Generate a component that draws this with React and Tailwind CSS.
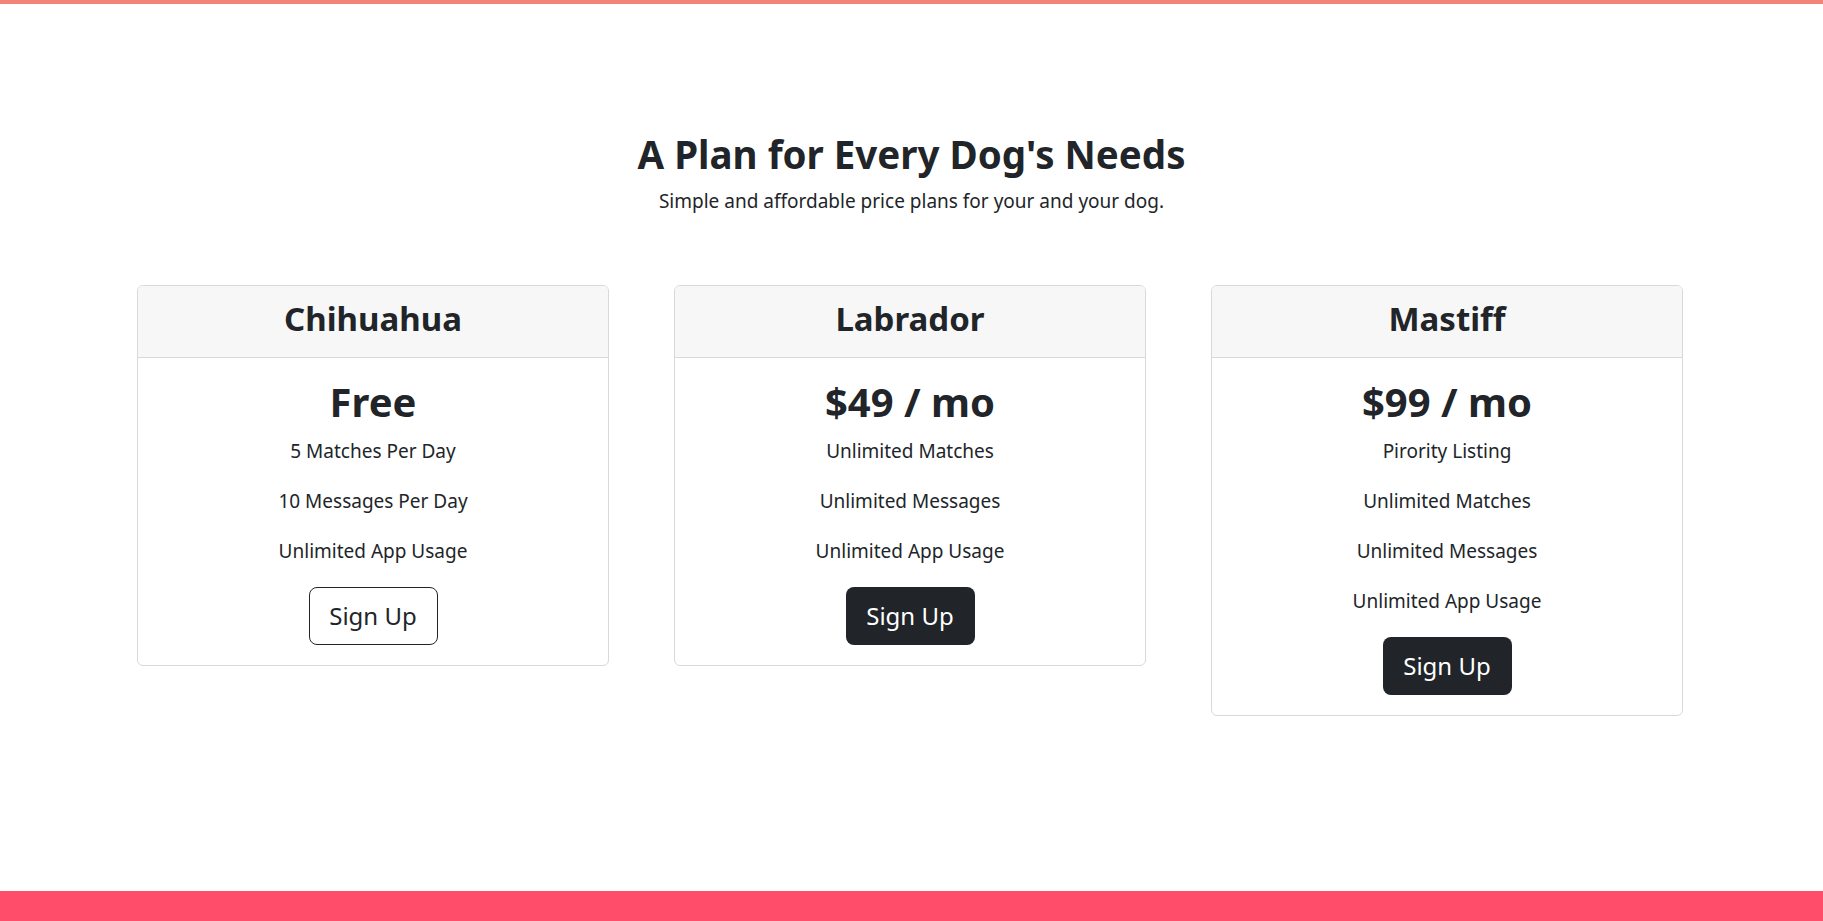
const PLANS = [
  {
    name: 'Chihuahua',
    price: 'Free',
    features: ['5 Matches Per Day', '10 Messages Per Day', 'Unlimited App Usage'],
    outline: true
  },
  {
    name: 'Labrador',
    price: '$49 / mo',
    features: ['Unlimited Matches', 'Unlimited Messages', 'Unlimited App Usage'],
    outline: false
  },
  {
    name: 'Mastiff',
    price: '$99 / mo',
    features: ['Pirority Listing', 'Unlimited Matches', 'Unlimited Messages', 'Unlimited App Usage'],
    outline: false
  }
];

const PlanCard = ({ plan }) => (
  <div className="border border-[#d9d9d9] rounded-[6px] overflow-hidden bg-white">
    <div className="h-[72px] pb-[6px] bg-[#f7f7f7] border-b border-[#d9d9d9] flex items-center justify-center">
      <h3 className="text-[33px] font-bold leading-none">{plan.name}</h3>
    </div>
    <div className="pt-[21px] pb-[20px] flex flex-col items-center">
      <h1 className="h-[48px] pb-[2px] flex items-center text-[40px] font-bold leading-none">{plan.price}</h1>
      <ul className="flex flex-col items-center">
        {plan.features.map((f) => (
          <li key={f} className="h-[50px] pb-[1px] flex items-center text-[19px]">
            {f}
          </li>
        ))}
      </ul>
      <button
        type="button"
        className={`mt-[10px] w-[129px] h-[58px] rounded-[8px] text-[24px] ${
          plan.outline ? 'border border-[#212529] text-[#212529] bg-white' : 'bg-[#212529] text-white'
        }`}
      >
        Sign Up
      </button>
    </div>
  </div>
);

export default function App() {
  return (
    <div
      className="min-h-screen flex flex-col bg-white text-[#212529]"
      style={{ fontFamily: '"Noto Sans", "Open Sans", sans-serif' }}
    >
      <div className="h-[4px] bg-[#f38377]" />

      <main className="flex-1 pt-[126px]">
        <div className="text-center">
          <h2 className="text-[38.5px] font-bold leading-[48px]">A Plan for Every Dog's Needs</h2>
          <p className="mt-[10px] text-[19px] leading-[27px]">
            Simple and affordable price plans for your and your dog.
          </p>
        </div>

        <div className="mt-[70px] pl-[137px] grid grid-cols-[472px_472px_472px] gap-[65px] items-start text-center">
          {PLANS.map((plan) => (
            <PlanCard key={plan.name} plan={plan} />
          ))}
        </div>
      </main>

      <div className="h-[30px] bg-[#ff4d6a]" />
    </div>
  );
}
